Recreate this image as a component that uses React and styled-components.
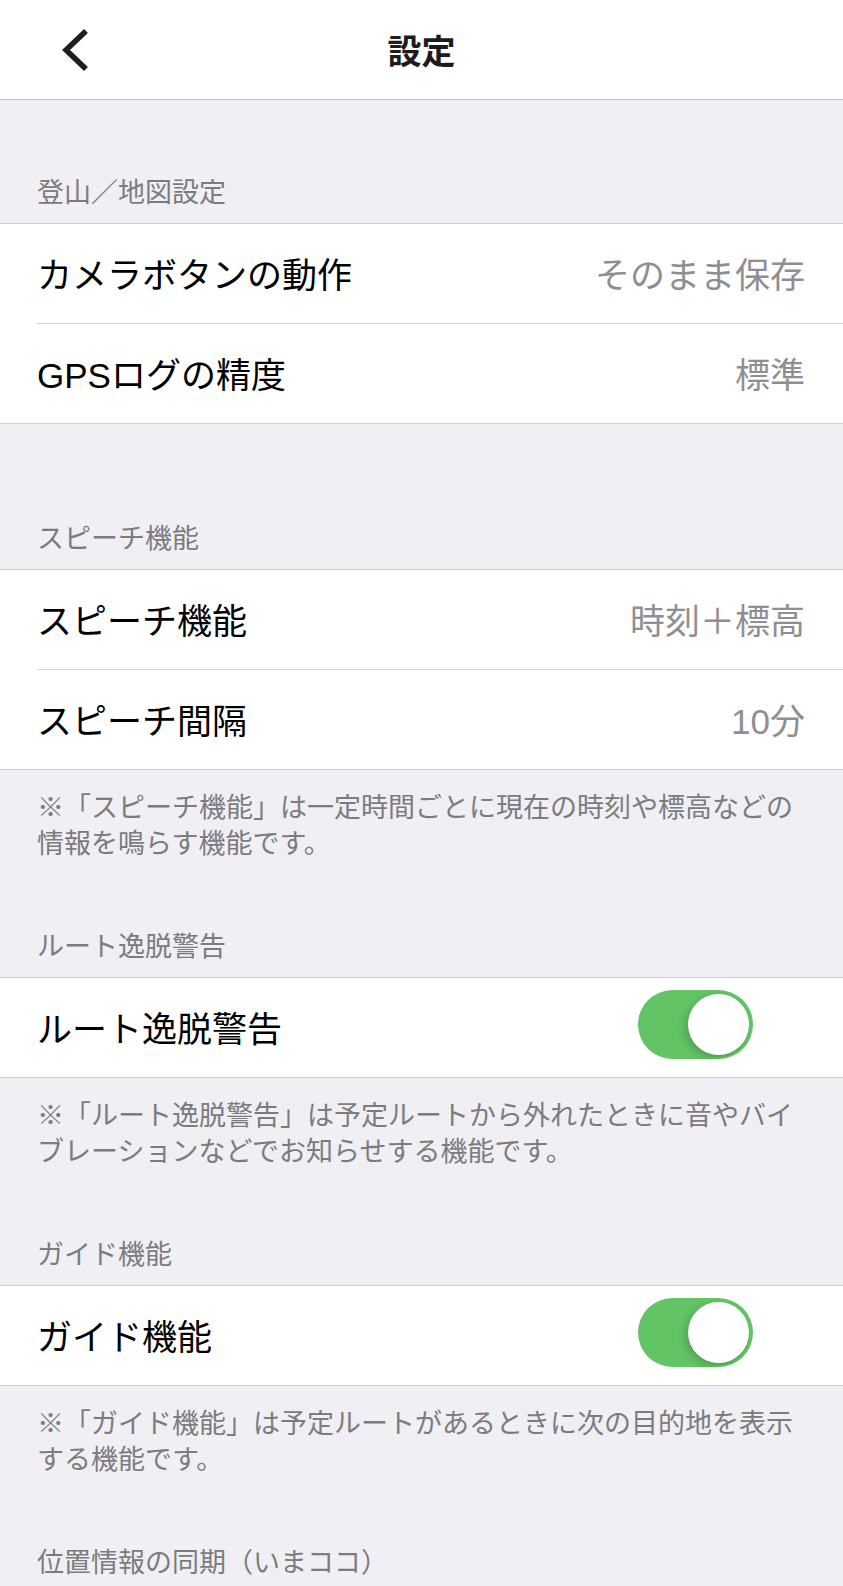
import React from "react";
import styled, { createGlobalStyle } from "styled-components";

const GlobalStyle = createGlobalStyle`
  html, body {
    margin: 0;
    padding: 0;
    background: #f0eff4;
  }
  body {
    font-family: "Noto Sans CJK JP", "Noto Sans", sans-serif;
    -webkit-font-smoothing: antialiased;
  }
  * { box-sizing: border-box; }
`;

const Page = styled.div`
  width: 100%;
  min-height: 1586px;
  background: #f0eff4;
  display: flex;
  flex-direction: column;
`;

const NavBar = styled.header`
  height: 100px;
  background: #ffffff;
  border-bottom: 1px solid #bdbdc1;
  display: grid;
  grid-template-columns: 1fr auto 1fr;
  align-items: center;
  padding: 0 0 0 62px;
`;

const BackButton = styled.button`
  justify-self: start;
  width: 30px;
  height: 46px;
  padding: 0;
  border: 0;
  background: transparent;
  display: flex;
  align-items: center;
  cursor: pointer;
`;

const NavTitle = styled.h1`
  margin: 0;
  font-family: "Noto Sans CJK JP", sans-serif;
  font-size: 34px;
  font-weight: 700;
  line-height: 46px;
  color: #1c1c1e;
  transform: translateX(-31px);
`;

const SectionHeader = styled.div`
  padding: ${(p) => p.$top}px 37px 14px;
  font-size: 27px;
  line-height: 37px;
  color: #7b7b80;
`;

const Group = styled.div`
  background: #ffffff;
  border-top: 1px solid #cfcfd3;
  border-bottom: 1px solid #cfcfd3;
`;

const Row = styled.div`
  padding-left: 37px;
  display: flex;
`;

const RowInner = styled.div`
  flex: 1;
  min-height: ${(p) => (p.$divider ? 100 : 99)}px;
  border-top: ${(p) => (p.$divider ? "1px solid #d4d4d8" : "0")};
  padding: 4px 38px 0 0;
  display: flex;
  align-items: center;
  justify-content: space-between;
`;

const Label = styled.span`
  font-family: "Liberation Sans", "Noto Sans CJK JP", sans-serif;
  font-size: 35px;
  line-height: 48px;
  color: #000000;
`;

const Value = styled.span`
  font-family: "Liberation Sans", "Noto Sans CJK JP", sans-serif;
  font-size: 35px;
  line-height: 48px;
  color: #8e8e93;
`;

const Switch = styled.button`
  width: 115px;
  height: 69px;
  margin: -10px 52px 0 0;
  padding: 4px;
  border: 0;
  border-radius: 35px;
  background: ${(p) => (p.$on ? "#63c466" : "#e9e9eb")};
  display: flex;
  justify-content: ${(p) => (p.$on ? "flex-end" : "flex-start")};
  align-items: center;
  cursor: pointer;
`;

const Knob = styled.span`
  width: 61px;
  height: 61px;
  border-radius: 50%;
  background: #ffffff;
  box-shadow: -4px 3px 9px rgba(0, 0, 0, 0.16), 0 2px 1px rgba(0, 0, 0, 0.05);
`;

const Footer = styled.p`
  margin: 0;
  padding: 18px 38px 0 37px;
  font-size: 27px;
  line-height: 36px;
  color: #7b7b80;
  line-break: strict;
`;

const ChevronLeft = () => (
  <svg width="30" height="46" viewBox="0 0 30 46" aria-hidden="true">
    <polyline
      points="24,4 4,23 24,42"
      fill="none"
      stroke="#1f1f21"
      strokeWidth="5.6"
      strokeLinecap="butt"
      strokeLinejoin="miter"
    />
  </svg>
);

const sections = [
  {
    title: "登山／地図設定",
    top: 72,
    rows: [
      { label: "カメラボタンの動作", value: "そのまま保存" },
      { label: "GPSログの精度", value: "標準" },
    ],
  },
  {
    title: "スピーチ機能",
    top: 94,
    rows: [
      { label: "スピーチ機能", value: "時刻＋標高" },
      { label: "スピーチ間隔", value: "10分" },
    ],
    footer: "※「スピーチ機能」は一定時間ごとに現在の時刻や標高などの情報を鳴らす機能です。",
  },
  {
    title: "ルート逸脱警告",
    top: 66,
    rows: [{ label: "ルート逸脱警告", toggle: true }],
    footer:
      "※「ルート逸脱警告」は予定ルートから外れたときに音やバイブレーションなどでお知らせする機能です。",
  },
  {
    title: "ガイド機能",
    top: 66,
    rows: [{ label: "ガイド機能", toggle: true }],
    footer: "※「ガイド機能」は予定ルートがあるときに次の目的地を表示する機能です。",
  },
  {
    title: "位置情報の同期（いまココ）",
    top: 66,
    rows: [],
  },
];

export default function App() {
  return (
    <>
      <GlobalStyle />
      <Page>
        <NavBar>
          <BackButton aria-label="戻る">
            <ChevronLeft />
          </BackButton>
          <NavTitle>設定</NavTitle>
          <span />
        </NavBar>
        {sections.map((s) => (
          <section key={s.title}>
            <SectionHeader $top={s.top}>{s.title}</SectionHeader>
            {s.rows.length > 0 && (
              <Group>
                {s.rows.map((r, i) => (
                  <Row key={r.label}>
                    <RowInner $divider={i > 0}>
                      <Label>{r.label}</Label>
                      {r.toggle ? (
                        <Switch $on aria-pressed="true">
                          <Knob />
                        </Switch>
                      ) : (
                        <Value>{r.value}</Value>
                      )}
                    </RowInner>
                  </Row>
                ))}
              </Group>
            )}
            {s.footer && <Footer>{s.footer}</Footer>}
          </section>
        ))}
      </Page>
    </>
  );
}
